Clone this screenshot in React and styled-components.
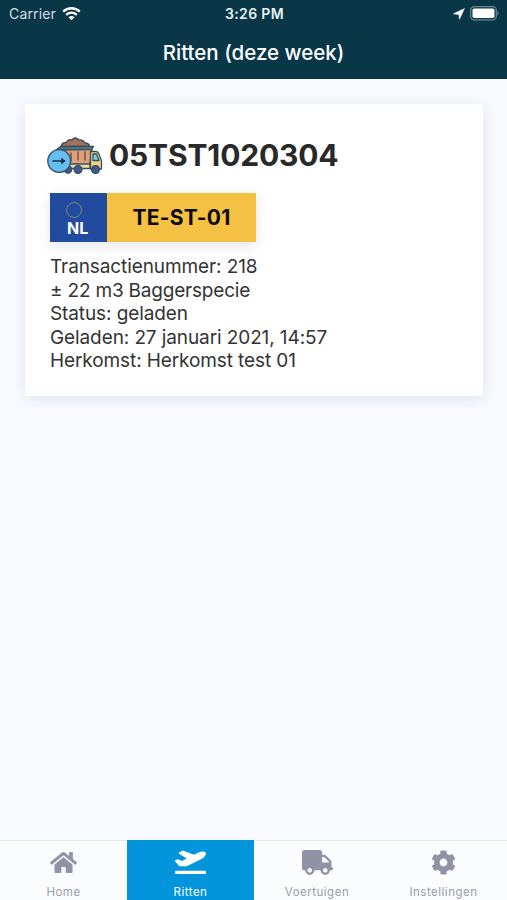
import React from 'react'
import styled, { createGlobalStyle } from 'styled-components'
import { FaHome, FaPlaneDeparture, FaTruck, FaCog } from 'react-icons/fa'

const GlobalStyle = createGlobalStyle`
  * {
    box-sizing: border-box;
  }
  body {
    margin: 0;
    font-family: Inter, "Liberation Sans", sans-serif;
  }
`;
const Screen = styled.div`
  display: flex;
  flex-direction: column;
  height: 900px;
  overflow: hidden;
  background: #f8faff;
`;
const Header = styled.header`
  height: 79px;
  background: #0a3748;
  border-bottom: 1px solid #07303f;
  color: white;
`;
const StatusBar = styled.div`
  display: grid;
  grid-template-columns: 1fr auto 1fr;
  align-items: center;
  height: 27px;
  padding: 0 7px 0 9px;
  font-size: 14px;
`;
const Carrier = styled.div`
  display: flex;
  align-items: center;
  gap: 6px;
  color: #d5dfe3;
  letter-spacing: 0.15px;
`;
const Time = styled.div`
  font-size: 14px;
  font-weight: 600;
  letter-spacing: 0.35px;
  color: #eaf1f4;
`;
const StatusIcons = styled.div`
  display: flex;
  justify-content: flex-end;
  align-items: center;
  gap: 5px;
`;
const PageTitle = styled.h1`
  margin: 0;
  font-size: 20.5px;
  line-height: 51px;
  font-weight: 500;
  letter-spacing: 0;
  text-align: center;
`;
const Content = styled.main`
  flex: 1;
  padding: 25px 24px 0 25px;
`;
const Card = styled.article`
  height: 292px;
  padding: 31px 22px 0;
  background: white;
  box-shadow: 0 3px 14px rgba(30, 35, 60, 0.11);
`;
const CardHeader = styled.div`
  display: flex;
  align-items: center;
  gap: 6px;
  height: 42px;
`;
const RideNumber = styled.h2`
  margin: -2px 0 0;
  font-size: 30px;
  font-weight: 700;
  letter-spacing: -0.15px;
  color: #292929;
`;
const Plate = styled.div`
  display: flex;
  width: 206px;
  height: 49px;
  margin: 16px 0 0 3px;
  box-shadow: 0 4px 14px rgba(0, 0, 0, 0.1);
`;
const PlateCountry = styled.div`
  display: flex;
  flex-direction: column;
  align-items: flex-start;
  width: 57px;
  padding: 9px 0 0 16px;
  background: #204b9e;
  color: white;
  font-size: 16px;
  font-weight: 700;
  line-height: 20px;
`;
const PlateRing = styled.span`
  width: 16px;
  height: 16px;
  border: 1px solid #8b8776;
  border-radius: 50%;
`;
const CountryCode = styled.span`
  margin-left: 1px;
`;
const PlateNumber = styled.div`
  flex: 1;
  background: #f5c142;
  color: #0b0a08;
  font-size: 21px;
  font-weight: 700;
  line-height: 49px;
  letter-spacing: 0.2px;
  text-align: center;
`;
const Details = styled.div`
  margin: 13px 0 0 3px;
  color: #333;
  font-size: 19px;
  line-height: 23.6px;
`;
const Detail = styled.div`
  white-space: nowrap;
  letter-spacing: ${(props) => props.$spacing || -0.1}px;
`;
const TabBar = styled.nav`
  display: grid;
  grid-template-columns: 127px 127px 126px 127px;
  height: 60px;
  border-top: 1px solid #e2e5ea;
  background: #fafcfe;
`;
const Tab = styled.div`
  display: flex;
  flex-direction: column;
  align-items: center;
  background: ${(props) => (props.$active ? '#0395dc' : 'transparent')};
  color: ${(props) => (props.$active ? 'white' : '#9092a6')};
  margin-top: ${(props) => (props.$active ? '-1px' : '0')};
  padding-top: ${(props) => (props.$active ? '1px' : '0')};
`;
const TabIcon = styled.span`
  display: flex;
  align-items: center;
  justify-content: center;
  height: 44px;
  padding-bottom: ${(props) => props.$lift || 0}px;
`;
const TabLabel = styled.span`
  font-size: 11.5px;
  line-height: 15px;
  letter-spacing: 0.5px;
  color: ${(props) => (props.$active ? 'white' : '#9b9daa')};
`;

//-------------------------------------------------------------------------//

const WifiIcon = () => (
  <svg width="19" height="14" viewBox="0 0 19 14" fill="none" stroke="white" strokeWidth="2.3">
    <path d="M1.2 4.7C6 .1 13 .1 17.8 4.7" />
    <path d="M4.2 7.9C7.3 5 11.7 5 14.8 7.9" />
    <path d="M6.5 10.2Q9.5 7.6 12.5 10.2L9.5 13.3Z" fill="white" stroke="none" />
  </svg>
);

const ArrowIcon = () => (
  <svg width="12" height="12" viewBox="0 0 12 12" fill="white" stroke="white" strokeWidth=".6" strokeLinejoin="round">
    <path d="M11.4 .6L6.5 11.2L5.8 6.5L.5 5.8Z" />
  </svg>
);

const BatteryIcon = () => (
  <svg width="30" height="15" viewBox="0 0 30 15">
    <rect x=".7" y=".7" width="25.6" height="13.2" rx="3.6" fill="none" stroke="#6c8791" strokeWidth="1.2" />
    <rect x="2.5" y="2.5" width="22" height="9.6" rx="1.8" fill="white" />
    <path d="M27.4 4.9Q30 7.3 27.4 9.7Z" fill="#6c8791" />
  </svg>
);

const LoadedTruckIcon = () => (
  <svg width="56" height="38" viewBox="0 0 56 38" stroke="#31505f" strokeWidth="1.3" strokeLinejoin="round" strokeLinecap="round">
    <path d="M14 9.5Q15 5.5 19 5.5Q21 2 25 3Q28-1 32 3Q36 2.5 38 6Q42 6 42.5 9.5Z" fill="#a8705c" />
    <path d="M13 12H45L42.5 28H15Z" fill="#dfa078" />
    <path d="M9 13L14 9.3H46.5L44.5 12.6Z" fill="#56717a" />
    <path d="M24 16V24M31 15V23M38 15V23" stroke="#74504b" strokeWidth="1.5" />
    <path d="M18 27H43V31.5H18Z" fill="#f3d9a0" />
    <path d="M43.5 14.5H49Q51 14.5 52 17L54.5 24V32H43.5Z" fill="#f3d17d" />
    <path d="M46 17H49.5L52 23.5H46Z" fill="#80cde8" />
    <circle cx="21" cy="32.5" r="3.7" fill="#48558a" />
    <circle cx="31" cy="32.5" r="3.9" fill="#48558a" />
    <circle cx="48.5" cy="32.5" r="3.9" fill="#48558a" />
    <circle cx="12.2" cy="24" r="11.4" fill="#65bdf1" />
    <path d="M6 24H17" strokeWidth="1.7" stroke="#173747" />
    <path d="M14.8 21.5L18.2 24L14.8 26.5Z" fill="#173747" stroke="#173747" strokeWidth=".8" />
  </svg>
);

const tabs = [
  { label: 'Home', icon: <FaHome size={27} />, lift: 1 },
  { label: 'Ritten', icon: <FaPlaneDeparture size={31} />, lift: 3, active: true },
  { label: 'Voertuigen', icon: <FaTruck size={31} />, lift: 1 },
  { label: 'Instellingen', icon: <FaCog size={25} />, lift: 2 },
];

const App = () => {
  return (
    <Screen>
      <GlobalStyle />
      <Header>
        <StatusBar>
          <Carrier>
            Carrier
            <WifiIcon />
          </Carrier>
          <Time>3:26 PM</Time>
          <StatusIcons>
            <ArrowIcon />
            <BatteryIcon />
          </StatusIcons>
        </StatusBar>
        <PageTitle>Ritten (deze week)</PageTitle>
      </Header>
      <Content>
        <Card>
          <CardHeader>
            <LoadedTruckIcon />
            <RideNumber>05TST1020304</RideNumber>
          </CardHeader>
          <Plate>
            <PlateCountry>
              <PlateRing />
              <CountryCode>NL</CountryCode>
            </PlateCountry>
            <PlateNumber>TE-ST-01</PlateNumber>
          </Plate>
          <Details>
            <Detail>Transactienummer: 218</Detail>
            <Detail $spacing={-0.2}>± 22 m3 Baggerspecie</Detail>
            <Detail>Status: geladen</Detail>
            <Detail>Geladen: 27 januari 2021, 14:57</Detail>
            <Detail>Herkomst: Herkomst test 01</Detail>
          </Details>
        </Card>
      </Content>
      <TabBar>
        {tabs.map((tab) => (
          <Tab key={tab.label} $active={tab.active}>
            <TabIcon $lift={tab.lift}>{tab.icon}</TabIcon>
            <TabLabel $active={tab.active}>{tab.label}</TabLabel>
          </Tab>
        ))}
      </TabBar>
    </Screen>
  )
}

export default App
